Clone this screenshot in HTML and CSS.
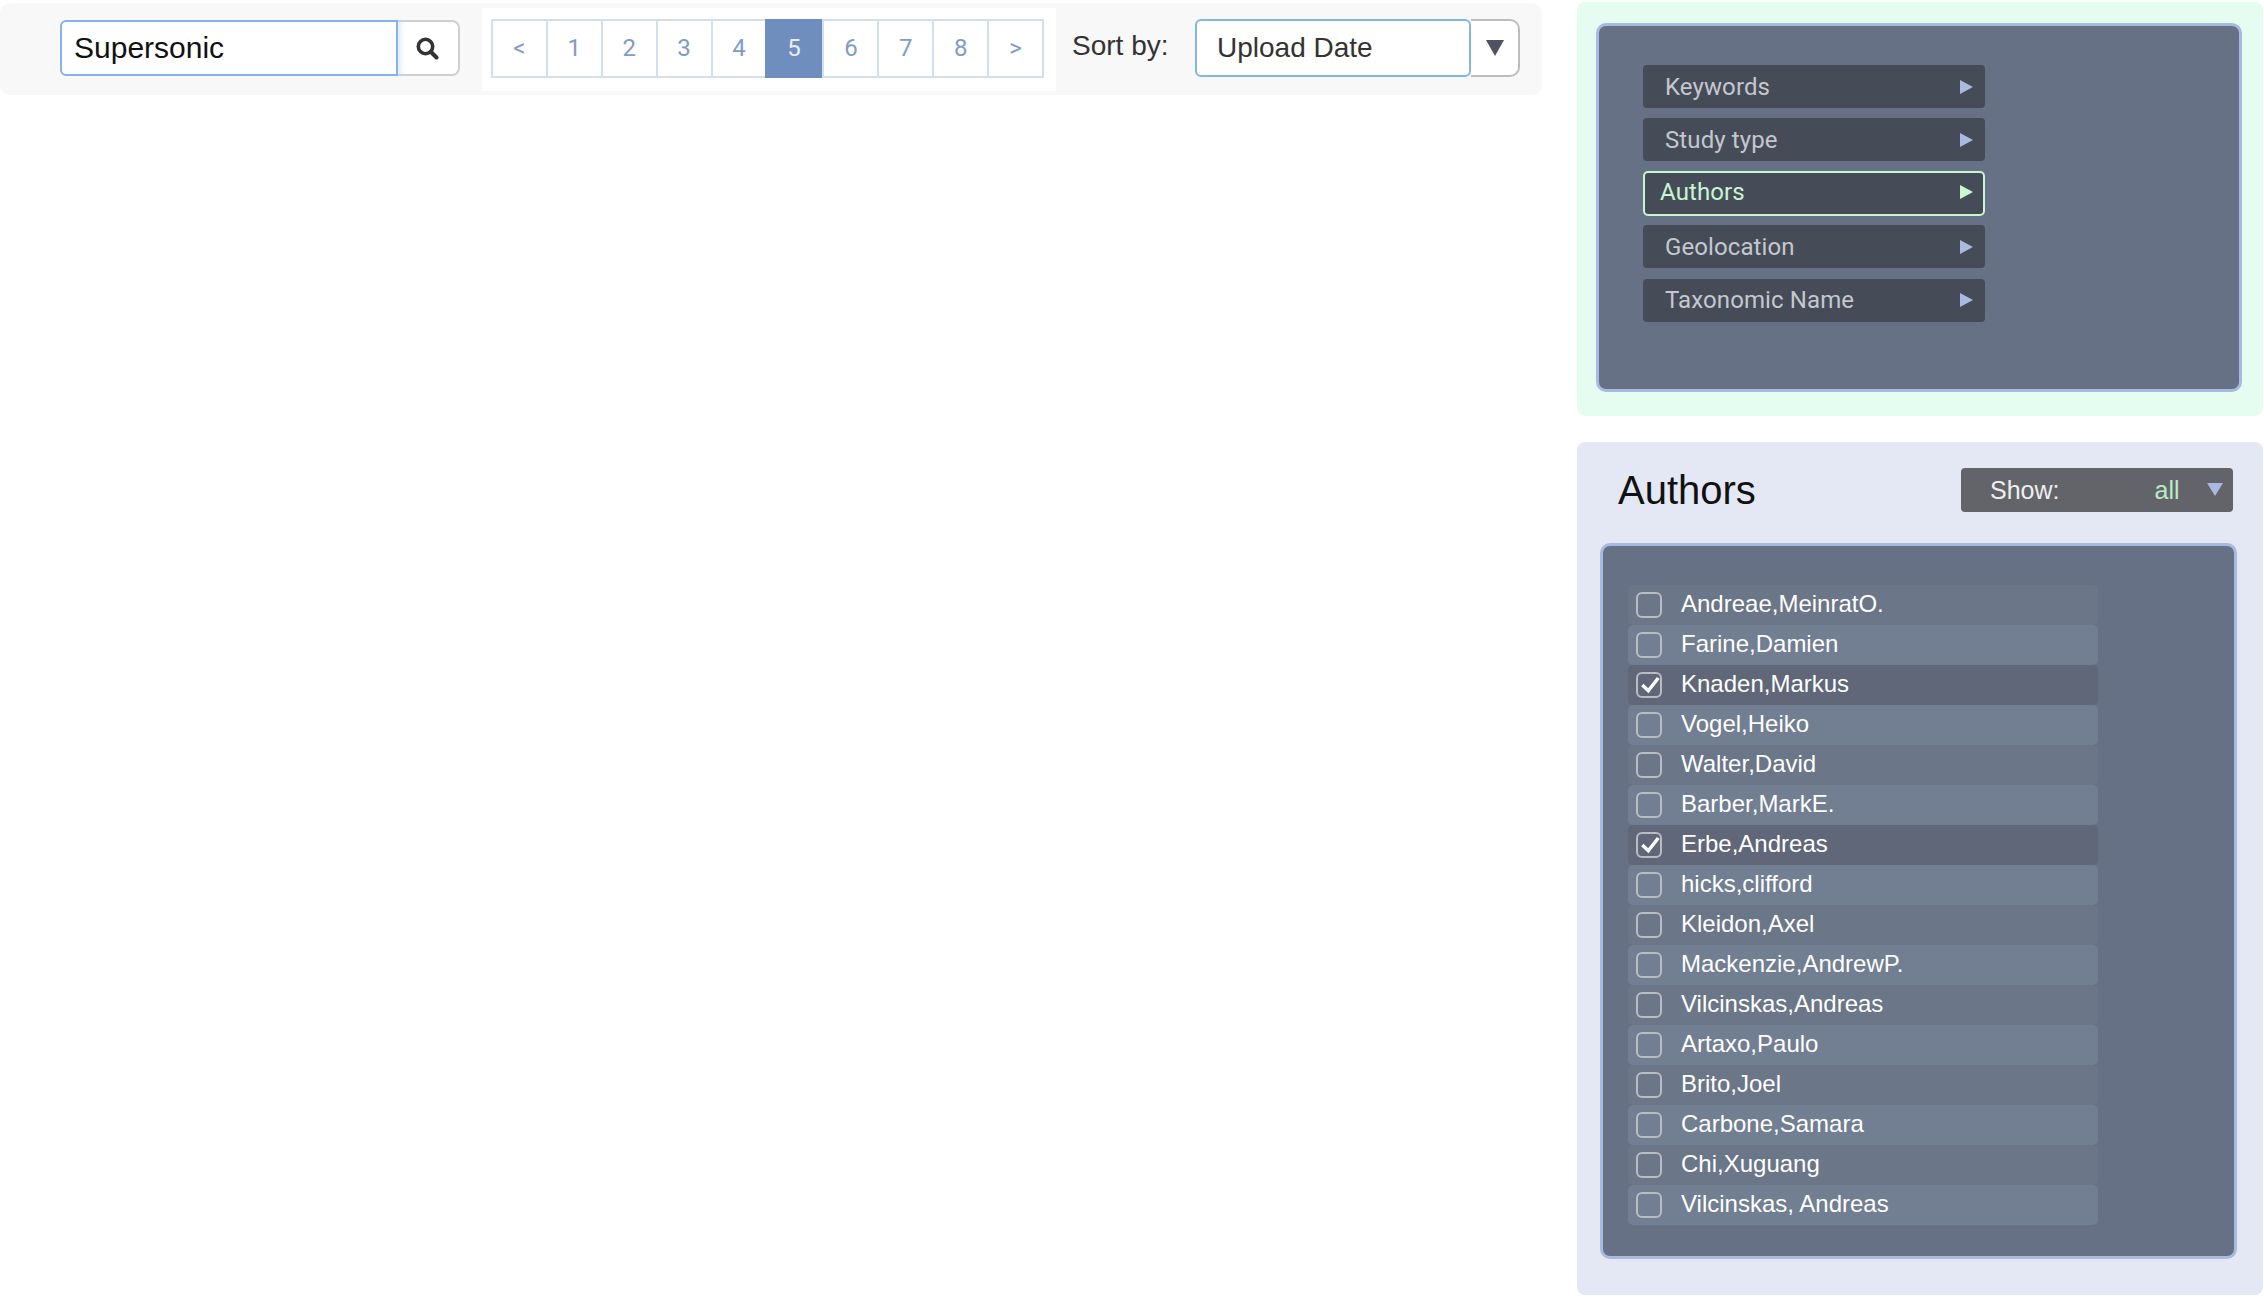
FILE: index.html
```html
<!DOCTYPE html>
<html lang="en">
<head>
<meta charset="utf-8">
<title>Search results</title>
<link rel="stylesheet" href="styles.css">
</head>
<body>
<main class="main">
  <div class="toolbar">
    <div class="search">
      <div class="search-input">Supersonic</div>
      <div class="search-btn">
        <svg width="23" height="23" viewBox="0 0 23 23"><circle cx="9.5" cy="9.5" r="7.2" fill="none" stroke="#333" stroke-width="3.6"/><path d="M15 15L20.5 20.5" stroke="#333" stroke-width="4" stroke-linecap="round"/></svg>
      </div>
    </div>
    <div class="pager-wrap">
      <ul class="pager">
        <li>&lt;</li><li>1</li><li>2</li><li>3</li><li>4</li><li class="active">5</li><li>6</li><li>7</li><li>8</li><li>&gt;</li>
      </ul>
    </div>
    <span class="sort-label">Sort by:</span>
    <div class="sort">
      <div class="sort-value">Upload Date</div>
      <div class="sort-btn"><span class="tri-down"></span></div>
    </div>
  </div>
</main>
<aside class="side">
  <section class="panel-green">
    <div class="dark-box menu-box">
      <div class="menu-item"><span>Keywords</span><i class="tri-right"></i></div>
      <div class="menu-item"><span>Study type</span><i class="tri-right"></i></div>
      <div class="menu-item selected"><span>Authors</span><i class="tri-right"></i></div>
      <div class="menu-item"><span>Geolocation</span><i class="tri-right"></i></div>
      <div class="menu-item"><span>Taxonomic Name</span><i class="tri-right"></i></div>
    </div>
  </section>
  <section class="panel-blue">
    <header class="panel-head">
      <h2>Authors</h2>
      <div class="show"><span class="show-label">Show:</span><span class="show-val">all</span><i class="tri-small"></i></div>
    </header>
    <div class="dark-box list-box">
      <div class="row odd"><span class="cb"></span>Andreae,MeinratO.</div>
      <div class="row"><span class="cb"></span>Farine,Damien</div>
      <div class="row checked"><span class="cb"><svg width="22" height="22" viewBox="0 0 22 22"><path d="M4.3 11L10.3 16.7L20.3 4" fill="none" stroke="#fff" stroke-width="3.4"/></svg></span>Knaden,Markus</div>
      <div class="row"><span class="cb"></span>Vogel,Heiko</div>
      <div class="row odd"><span class="cb"></span>Walter,David</div>
      <div class="row"><span class="cb"></span>Barber,MarkE.</div>
      <div class="row checked"><span class="cb"><svg width="22" height="22" viewBox="0 0 22 22"><path d="M4.3 11L10.3 16.7L20.3 4" fill="none" stroke="#fff" stroke-width="3.4"/></svg></span>Erbe,Andreas</div>
      <div class="row"><span class="cb"></span>hicks,clifford</div>
      <div class="row odd"><span class="cb"></span>Kleidon,Axel</div>
      <div class="row"><span class="cb"></span>Mackenzie,AndrewP.</div>
      <div class="row odd"><span class="cb"></span>Vilcinskas,Andreas</div>
      <div class="row"><span class="cb"></span>Artaxo,Paulo</div>
      <div class="row odd"><span class="cb"></span>Brito,Joel</div>
      <div class="row"><span class="cb"></span>Carbone,Samara</div>
      <div class="row odd"><span class="cb"></span>Chi,Xuguang</div>
      <div class="row"><span class="cb"></span>Vilcinskas, Andreas</div>
    </div>
  </section>
</aside>
</body>
</html>
```
FILE: styles.css
```css
* { box-sizing: border-box; }
html, body { margin: 0; height: 100%; }
body {
  display: flex;
  background: #fff;
  font-family: "Liberation Sans", Arial, sans-serif;
  overflow: hidden;
}
.main { width: 1542px; padding-top: 3px; flex: none; }
.toolbar {
  height: 92px;
  background: #f8f8f8;
  border-radius: 10px;
  display: flex;
  align-items: center;
  padding-left: 60px;
}
.search { display: flex; height: 56px; width: 400px; flex: none; margin-top: -2px; }
.search-input {
  width: 338px;
  border: 2px solid #83b6e8;
  border-radius: 6px 0 0 6px;
  background: #fff;
  font-size: 30px;
  line-height: 52px;
  padding-left: 12px;
  color: #111;
}
.search-btn {
  flex: 1;
  background: #fff;
  border: 2px solid #cfcfcf;
  border-left: none;
  border-radius: 0 8px 8px 0;
  display: flex;
  align-items: center;
  justify-content: center;
  padding-right: 2px;
  box-shadow: inset 6px 0 6px -4px #d5e6f7;
}
.pager-wrap {
  margin-left: 22px;
  width: 574px;
  height: 83px;
  background: #fff;
  padding: 11px 0 0 9px;
  flex: none;
}
.pager {
  list-style: none;
  margin: 0;
  padding: 0;
  display: flex;
  height: 59px;
  width: 553px;
  border: 2px solid #d3deef;
}
.pager li {
  flex: 1;
  border-left: 2px solid #d3deef;
  display: flex;
  align-items: center;
  justify-content: center;
  font-family: Roboto, sans-serif;
  font-size: 24px;
  color: #7d9cca;
}
.pager li:first-child { border-left: none; }
.pager li.active {
  flex: none;
  width: 57px;
  background: #6f8dbd;
  color: #e8edf6;
  margin: -2px 0;
  border-left: none;
}
.sort-label {
  margin-left: 16px;
  width: 123px;
  font-size: 28px;
  color: #333;
  flex: none;
  margin-top: -6px;
}
.sort { display: flex; width: 325px; height: 58px; flex: none; margin-top: -2px; }
.sort-value {
  width: 276px;
  background: #fff;
  border: 2px solid #83b6e8;
  border-radius: 6px;
  font-size: 28px;
  line-height: 54px;
  padding-left: 20px;
  color: #333;
}
.sort-btn {
  flex: 1;
  border: 2px solid #bdbdbd;
  border-left: none;
  border-radius: 0 10px 10px 0;
  background: #fff;
  display: flex;
  align-items: center;
  justify-content: center;
}
.tri-down {
  width: 0;
  height: 0;
  border-left: 9.5px solid transparent;
  border-right: 9.5px solid transparent;
  border-top: 16px solid #50535f;
}
.side { margin-left: 35px; width: 686px; flex: none; padding-top: 2px; }
.panel-green {
  height: 414px;
  background: #e5fdf1;
  border-radius: 8px;
  padding: 21px 21px 24px 19px;
}
.dark-box {
  background: #667185;
  border: 3px solid #a9b9e0;
  border-radius: 10px;
}
.menu-box {
  height: 369px;
  padding: 39px 0 0 44px;
  display: flex;
  flex-direction: column;
  gap: 10.4px;
}
.menu-item {
  width: 342px;
  height: 43px;
  background: #454c58;
  border-radius: 4px;
  display: flex;
  align-items: center;
  justify-content: space-between;
  padding: 0 12px 0 22px;
  font-family: Roboto, sans-serif;
  font-size: 24px;
  letter-spacing: 0.1px;
  color: #c4c8ce;
}
.tri-right {
  width: 0;
  height: 0;
  border-top: 7.5px solid transparent;
  border-bottom: 7.5px solid transparent;
  border-left: 13px solid #a9b9e0;
}
.menu-item.selected {
  height: 45px;
  margin: -1px 0;
  border: 2px solid #c9f5d3;
  border-radius: 5px;
  color: #c9f5d3;
  padding: 0 10px 2px 15px;
}
.menu-item.selected .tri-right { border-left-color: #c9f5d3; }
.panel-blue {
  height: 853px;
  margin-top: 26px;
  background: #e4e8f4;
  border-radius: 8px;
  padding: 26px 30px 0 23px;
}
.panel-head { display: flex; align-items: center; justify-content: space-between; height: 44px; margin-bottom: 31px; padding-left: 18px; }
.panel-head h2 { margin: 0; font-weight: 400; font-size: 40px; color: #111; }
.show {
  width: 272px;
  height: 44px;
  background: #636469;
  border-radius: 4px;
  display: flex;
  align-items: center;
  font-size: 25px;
  color: #eee;
  padding-left: 29px;
}
.show-val { margin-left: 95px; color: #b9ecc6; }
.tri-small {
  margin-left: 27px;
  margin-top: -2px;
  width: 0;
  height: 0;
  border-left: 8px solid transparent;
  border-right: 8px solid transparent;
  border-top: 13px solid #a9b9e0;
}
.list-box {
  width: 637px;
  height: 716px;
  margin-right: -6px;
  padding: 39px 0 0 25px;
}
.row {
  width: 470px;
  height: 40px;
  display: flex;
  align-items: center;
  background: #727e91;
  border-radius: 5px;
  padding: 0 0 2px 8px;
  font-size: 24px;
  color: #fff;
}
.row.odd { background: #6b7688; }
.row.checked { background: #5f6779; }
.cb {
  width: 26px;
  height: 26px;
  flex: none;
  border: 2px solid #b9bcc2;
  border-radius: 6px;
  margin: 2px 19px 0 0;
  display: flex;
  align-items: center;
  justify-content: center;
}
```
